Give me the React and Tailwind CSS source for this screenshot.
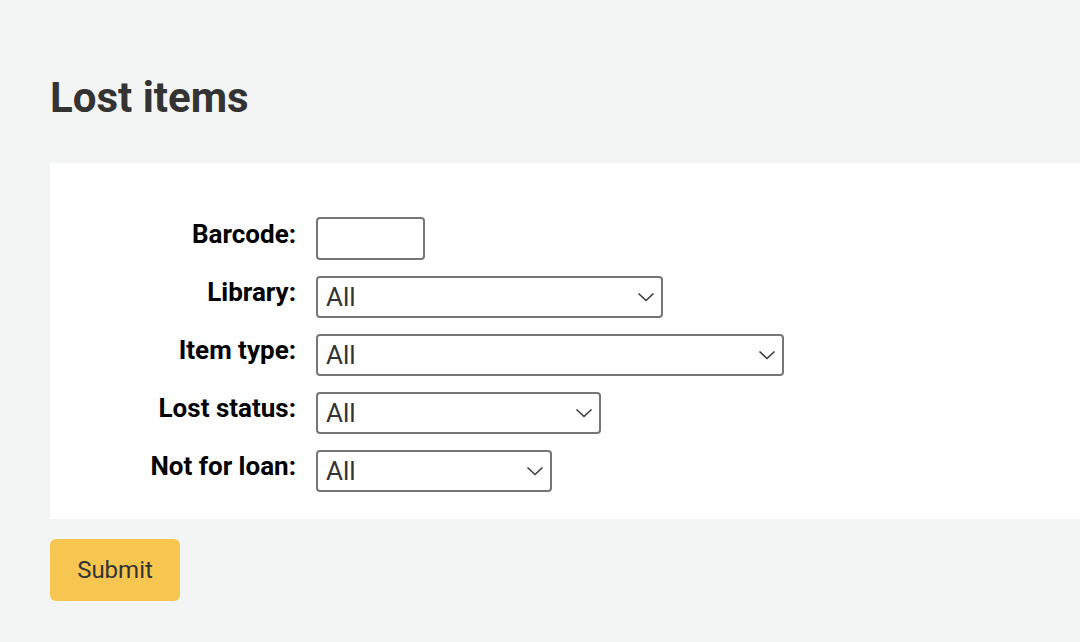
import React from "react";

function Chevron() {
  return (
    <svg width="18" height="10" viewBox="0 0 18 10" fill="none" className="shrink-0">
      <path d="M1.5 1.5 L9 8.5 L16.5 1.5" stroke="#3a3a3a" strokeWidth="1.6" />
    </svg>
  );
}

function Row({ label, children }) {
  return (
    <div className="flex items-center">
      <div className="w-[246px] text-right text-[26px] font-bold text-black leading-none -mt-[10px] whitespace-nowrap">{label}</div>
      <div className="ml-[20px]">{children}</div>
    </div>
  );
}

function Select({ width }) {
  return (
    <div
      className="h-[42px] border-2 border-[#767676] rounded-[4px] bg-white flex items-center justify-between pl-[8px] pr-[6px]"
      style={{ width }}
    >
      <span className="text-[26px] text-[#333] leading-none">All</span>
      <Chevron />
    </div>
  );
}

export default function App() {
  return (
    <div className="min-h-[642px] w-[1080px] bg-[#f3f4f4] overflow-hidden" style={{ fontFamily: "Roboto, 'Noto Sans', sans-serif" }}>
      <div className="pl-[50px] pt-[73px]">
        <h1 className="text-[42px] font-bold text-[#333] leading-[50px]">Lost items</h1>
        <div className="mt-[40px] bg-white w-[1100px] pt-[54px] pb-[27px] flex flex-col gap-[16px]">
          <Row label="Barcode:">
            <div className="w-[109px] h-[43px] border-2 border-[#767676] rounded-[4px] bg-white" />
          </Row>
          <Row label="Library:">
            <Select width={347} />
          </Row>
          <Row label="Item type:">
            <Select width={468} />
          </Row>
          <Row label="Lost status:">
            <Select width={285} />
          </Row>
          <Row label="Not for loan:">
            <Select width={236} />
          </Row>
        </div>
        <button className="mt-[20px] w-[130px] h-[62px] bg-[#f7c651] rounded-[6px] text-[24px] text-[#333] flex items-center justify-center">
          Submit
        </button>
      </div>
    </div>
  );
}
